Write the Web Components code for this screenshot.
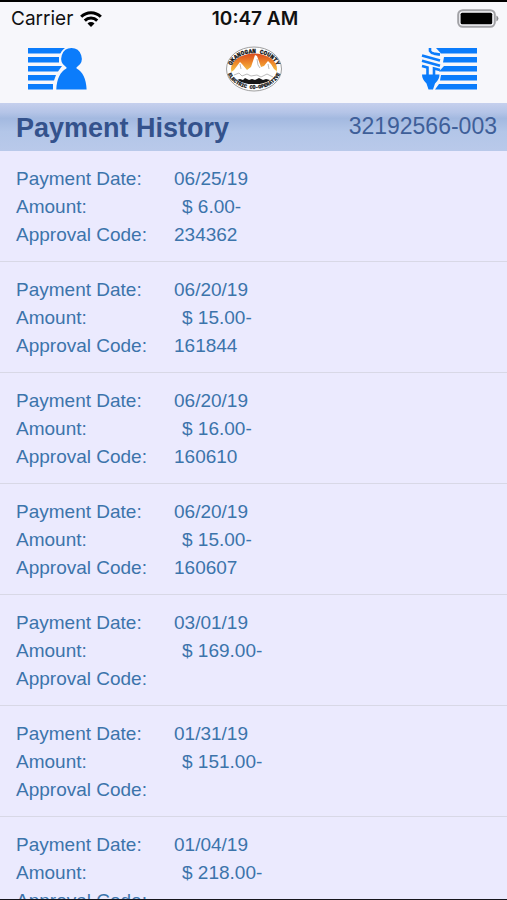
<!DOCTYPE html>
<html lang="en">
<head>
<meta charset="utf-8">
<meta name="viewport" content="width=device-width, initial-scale=1">
<title>Payment History</title>
<style>
    html, body { height: 100%; }
    body {
        margin: 0;
        overflow: hidden;
        background: #ebeafe;
        font-family: "Liberation Sans", Arial, Helvetica, sans-serif;
    }
</style>
</head>
<body>
<app-screen>
    <status-bar slot="top" carrier="Carrier" time="10:47 AM"></status-bar>
    <nav-bar slot="top"></nav-bar>
    <section-header slot="top">
        Payment History
        <span slot="account">32192566-003</span>
    </section-header>
    <payment-entry date="06/25/19" amount="$ 6.00-" code="234362"></payment-entry>
    <payment-entry date="06/20/19" amount="$ 15.00-" code="161844"></payment-entry>
    <payment-entry date="06/20/19" amount="$ 16.00-" code="160610"></payment-entry>
    <payment-entry date="06/20/19" amount="$ 15.00-" code="160607"></payment-entry>
    <payment-entry date="03/01/19" amount="$ 169.00-"></payment-entry>
    <payment-entry date="01/31/19" amount="$ 151.00-"></payment-entry>
    <payment-entry date="01/04/19" amount="$ 218.00-"></payment-entry>
</app-screen>

<script>
class AppScreen extends HTMLElement {
    constructor() {
        super();
        this.attachShadow({ mode: 'open' });
        this.shadowRoot.innerHTML = `
            <style>
                :host {
                    display: flex;
                    flex-direction: column;
                    box-sizing: border-box;
                    height: 100vh;
                    border-top: 2px solid #000;
                    border-bottom: 1px solid #15151c;
                }
                header { flex: none; }
                main { flex: 1; min-height: 0; overflow: hidden; }
            </style>
            <header><slot name="top"></slot></header>
            <main><slot></slot></main>`;
    }
}

class StatusBar extends HTMLElement {
    constructor() {
        super();
        this.attachShadow({ mode: 'open' });
    }

    connectedCallback() {
        this.shadowRoot.innerHTML = `
            <style>
                :host {
                    display: grid;
                    grid-template-columns: 1fr auto 1fr;
                    align-items: center;
                    height: 32px;
                    padding: 0 8px 0 11px;
                    background: #f7f7fb;
                    color: #111;
                    font: 19px/34px Inter, sans-serif;
                }
                .carrier { display: flex; align-items: center; gap: 7px; }
                .time { font-weight: 600; }
                .battery { justify-self: end; }
                svg { display: block; }
            </style>
            <div class="carrier">
                <span>${this.getAttribute('carrier')}</span>
                <svg width="22" height="16" viewBox="0 0 22 16" aria-hidden="true">
                    <g fill="none" stroke="#000" stroke-width="3">
                        <path d="M1.2 5.8a13.6 13.6 0 0 1 19.6 0"/>
                        <path d="M4.8 9.6a8.7 8.7 0 0 1 12.4 0"/>
                    </g>
                    <path d="M11 16l-3.5-3.6a5 5 0 0 1 7 0z"/>
                </svg>
            </div>
            <span class="time">${this.getAttribute('time')}</span>
            <svg class="battery" width="42" height="20" viewBox="0 0 42 20" aria-hidden="true">
                <rect x="1.2" y="1.2" width="36.6" height="16.6" rx="4.5" fill="#f7f7fb" stroke="#a2a2a6" stroke-width="2"/>
                <rect x="3.6" y="3.8" width="31.6" height="11.4" rx="1.5"/>
                <path d="M39.4 6.6q2 1 2 2.9t-2 2.9z" fill="#8a8a8e"/>
            </svg>`;
    }
}

class NavBar extends HTMLElement {
    constructor() {
        super();
        this.attachShadow({ mode: 'open' });
        this.shadowRoot.innerHTML = `
            <style>
                :host {
                    display: flex;
                    justify-content: space-between;
                    align-items: center;
                    height: 69px;
                    padding: 0 28px 0 26px;
                    background: #f7f7fb;
                }
                button {
                    padding: 0;
                    border: 0;
                    background: none;
                    color: #0b7cfb;
                    cursor: pointer;
                }
                svg { display: block; }
                .bars { fill: currentColor; }
                .logo text {
                    font: bold 6px "Liberation Mono", monospace;
                    text-anchor: middle;
                    fill: #111;
                    stroke: #111;
                    stroke-width: 0.3;
                }
                .logo .small { font-size: 5px; }
            </style>
            <button type="button" aria-label="Account">
                <svg width="62" height="46" viewBox="0 0 62 46" class="bars">
                    <path d="M2 2h39l-5 5.6H2zM2 11h31v5.6H2zM2 20h34l-4 5.6H2zM2 29h28l-2 5.6H2zM2 38h25v5.6H2z"/>
                    <path stroke="#f7f7fb" stroke-width="4" paint-order="stroke"
                        d="M45.5 2a10.3 10.3 0 0 1 6 18.6q-2 1.4-.5 2.2c5.5 3 9.3 10.2 9.6 20.8H30.3C30.7 33 34.5 25.8 40 22.8q1.5-.8-.5-2.2A10.3 10.3 0 0 1 45.5 2z"/>
                </svg>
            </button>
            <svg class="logo" width="58" height="46" viewBox="0 0 58 46" role="img" aria-label="Okanogan County Electric Co-operative">
                <defs>
                    <linearGradient id="sky" x1="0" y1="0" x2="0" y2="1">
                        <stop offset="0" stop-color="#d9471c"/>
                        <stop offset="0.5" stop-color="#ee8a2a"/>
                        <stop offset="1" stop-color="#f6cf52"/>
                    </linearGradient>
                    <clipPath id="scene"><ellipse cx="29" cy="23" rx="23" ry="15.5"/></clipPath>
                    <path id="arc-top" d="M6 23A23 16 0 0 1 52 23"/>
                    <path id="arc-bottom" d="M2 22A27 20.8 0 0 0 56 22"/>
                </defs>
                <ellipse cx="29" cy="23" rx="27.5" ry="22" fill="#fdfdfd" stroke="#888" stroke-width="0.8"/>
                <g clip-path="url(#scene)">
                    <rect x="5" y="7" width="48" height="20" fill="url(#sky)"/>
                    <path fill="#fff" d="M5 27l4-3 6-8 2 2 5 6 4-3 4-12 2 1 4 11 3-1 4-5 3 3 3 5 6 5v12H5z"/>
                    <path fill="none" stroke="#aaa" stroke-width="0.8" d="M9 29l5-2 3 3 5-2 4 2 6-1 4 2 6-3 6 3M32 13l1 6 2 3M15 18l1 5M43 18l1 5"/>
                    <path fill="#171717" d="M12 34l3-1 3 1 2-2 4 2 3-1 3 1 4-2 4 2 3-1 4 1 2 1-5 3H18z"/>
                </g>
                <text><textPath href="#arc-top" startOffset="50%">OKANOGAN COUNTY</textPath></text>
                <text class="small"><textPath href="#arc-bottom" startOffset="50%">ELECTRIC CO-OPERATIVE</textPath></text>
            </svg>
            <button type="button" aria-label="Energy usage">
                <svg width="60" height="46" viewBox="0 0 60 46" class="bars">
                    <path d="M17 2h41v5.6H22zM25 11h33v5.6H24zM25 20h33v5.6H20zM22 29h36v5.6H21zM20 38h38v5.6H16z"/>
                    <g fill="none" stroke="currentColor" stroke-width="2.6">
                        <path d="M11 2v3q1 2 4 2.6l6 1"/>
                        <path d="M3 9.500l18 5"/>
                        <path d="M3 14.800l18 5"/>
                        <path d="M3 20l5.500 1.500v8"/>
                        <path d="M21 24l-6-1.500v7"/>
                    </g>
                    <path d="M3 28.500h17.500q0 5-4.500 9l-2 6.100H9.500l-2-6.100q-4.500-4-4.500-9z"/>
                </svg>
            </button>`;
    }
}

class SectionHeader extends HTMLElement {
    constructor() {
        super();
        this.attachShadow({ mode: 'open' });
        this.shadowRoot.innerHTML = `
            <style>
                :host {
                    display: flex;
                    justify-content: space-between;
                    height: 48px;
                    padding: 0 10px 0 16px;
                    background: linear-gradient(#c6d0ed, #b4c4e7 20%, #a3b9e0 32%, #b3c6e8 60%, #b9c9ea);
                    color: #34528c;
                }
                h1 { margin: 0; font-size: 27px; line-height: 50px; }
                .account { font-size: 23px; line-height: 46px; color: #3f5f99; }
            </style>
            <h1><slot></slot></h1>
            <div class="account"><slot name="account"></slot></div>`;
    }
}

class PaymentEntry extends HTMLElement {
    constructor() {
        super();
        this.attachShadow({ mode: 'open' });
    }

    connectedCallback() {
        this.shadowRoot.innerHTML = `
            <style>
                :host {
                    display: block;
                    padding: 14px 16px 12px;
                    border-bottom: 1px solid #d8d8e6;
                    background: #ebeafe;
                    color: #3c74ab;
                    font-size: 19px;
                    line-height: 28px;
                }
                dl {
                    display: grid;
                    grid-template-columns: 158px 1fr;
                    margin: 0;
                }
                dd { margin: 0; }
                .amount { padding-left: 8px; }
            </style>
            <dl>
                <dt>Payment Date:</dt><dd>${this.getAttribute('date')}</dd>
                <dt>Amount:</dt><dd class="amount">${this.getAttribute('amount')}</dd>
                <dt>Approval Code:</dt><dd>${this.getAttribute('code') || ''}</dd>
            </dl>`;
    }
}

customElements.define('app-screen', AppScreen);
customElements.define('status-bar', StatusBar);
customElements.define('nav-bar', NavBar);
customElements.define('section-header', SectionHeader);
customElements.define('payment-entry', PaymentEntry);
</script>
</body>
</html>
